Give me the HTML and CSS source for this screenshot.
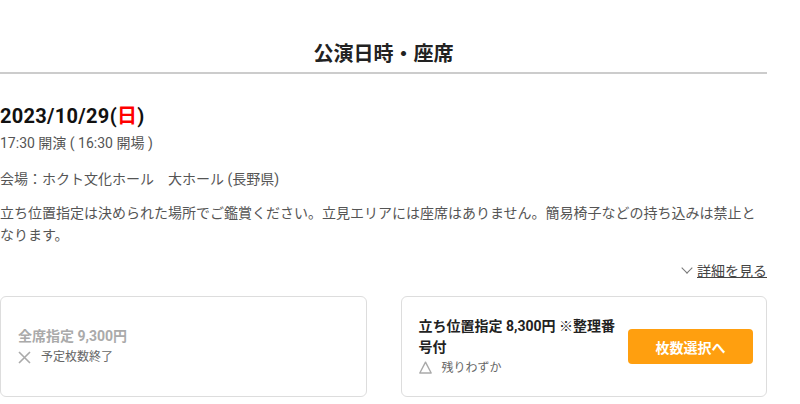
FILE: index.html
```html
<!DOCTYPE html>
<html lang="ja">
<head>
<meta charset="utf-8">
<title>公演日時・座席</title>
<link rel="stylesheet" href="styles.css">
</head>
<body>
<div class="page">
  <h2 class="section-title">公演日時・座席</h2>

  <div class="show">
    <p class="show-date">2023/10/29(<span class="sun">日</span>)</p>
    <p class="show-time">17:30 開演 ( 16:30 開場 )</p>
    <p class="show-venue">会場：ホクト文化ホール　大ホール (長野県)</p>
    <p class="show-note">立ち位置指定は決められた場所でご鑑賞ください。立見エリアには座席はありません。簡易椅子などの持ち込みは禁止となります。</p>
    <div class="more"><span class="more-arrow"></span><a href="#">詳細を見る</a></div>
  </div>

  <div class="tickets">
    <div class="ticket soldout">
      <div class="ticket-info">
        <p class="ticket-name">全席指定 9,300円</p>
        <p class="ticket-status">
          <svg class="mark" width="13" height="13" viewBox="0 0 13 13"><path d="M1 1L12 12M12 1L1 12" stroke="#aaa" stroke-width="1.6" fill="none"/></svg>予定枚数終了
        </p>
      </div>
    </div>
    <div class="ticket">
      <div class="ticket-info">
        <p class="ticket-name">立ち位置指定 8,300円 ※整理番号付</p>
        <p class="ticket-status">
          <svg class="mark" width="13" height="13" viewBox="0 0 13 13"><path d="M6.5 1.2L12.2 12H0.8Z" stroke="#aaa" stroke-width="1.4" fill="none" stroke-linejoin="round"/></svg>残りわずか
        </p>
      </div>
      <button class="ticket-btn">枚数選択へ</button>
    </div>
  </div>
</div>
</body>
</html>
```

FILE: styles.css
```css
body {
  margin: 0;
  font-family: Roboto, "Noto Sans CJK JP", sans-serif;
  color: #222;
  background: #fff;
}
p {
  margin: 0;
}
.page {
  width: 767px;
  padding-top: 36px;
}
.section-title {
  margin: 0;
  text-align: center;
  font-size: 20px;
  font-weight: bold;
  line-height: 36px;
  border-bottom: 2px solid #ccc;
}
.show {
  padding-top: 28px;
}
.show-date {
  font-size: 20px;
  font-weight: bold;
  letter-spacing: 0.3px;
  line-height: 28px;
  color: #111;
}
.sun {
  color: #f00;
}
.show-time {
  margin-top: 2px;
  font-size: 14px;
  color: #555;
  line-height: 22px;
}
.show-venue {
  margin-top: 14px;
  font-size: 14px;
  color: #555;
  line-height: 22px;
}
.show-note {
  margin-top: 12px;
  font-size: 14px;
  color: #555;
  line-height: 22px;
}
.more {
  margin-top: 14px;
  text-align: right;
  font-size: 14px;
  line-height: 22px;
}
.more a {
  color: #444;
  text-decoration: underline;
}
.more-arrow {
  display: inline-block;
  width: 7px;
  height: 7px;
  border-right: 1px solid #777;
  border-bottom: 1px solid #777;
  transform: rotate(45deg);
  margin-right: 6px;
  position: relative;
  top: -4px;
}
.tickets {
  display: flex;
  gap: 34px;
  margin-top: 14px;
}
.ticket {
  flex: 1;
  height: 101px;
  box-sizing: border-box;
  border: 1px solid #ddd;
  border-radius: 6px;
  padding: 0 13px 0 17px;
  display: flex;
  align-items: center;
  gap: 10px;
}
.ticket-info {
  flex: 1;
}
.ticket-name {
  font-size: 14px;
  font-weight: bold;
  line-height: 21px;
  color: #222;
}
.ticket-status {
  display: flex;
  align-items: center;
  font-size: 12px;
  color: #666;
  line-height: 20px;
}
.mark {
  margin-right: 10px;
}
.soldout .ticket-name {
  color: #aaa;
}
.ticket-btn {
  width: 125px;
  height: 35px;
  border: none;
  border-radius: 4px;
  background: #ff9f0f;
  color: #fff;
  font-family: inherit;
  font-size: 14px;
  font-weight: bold;
}
```
